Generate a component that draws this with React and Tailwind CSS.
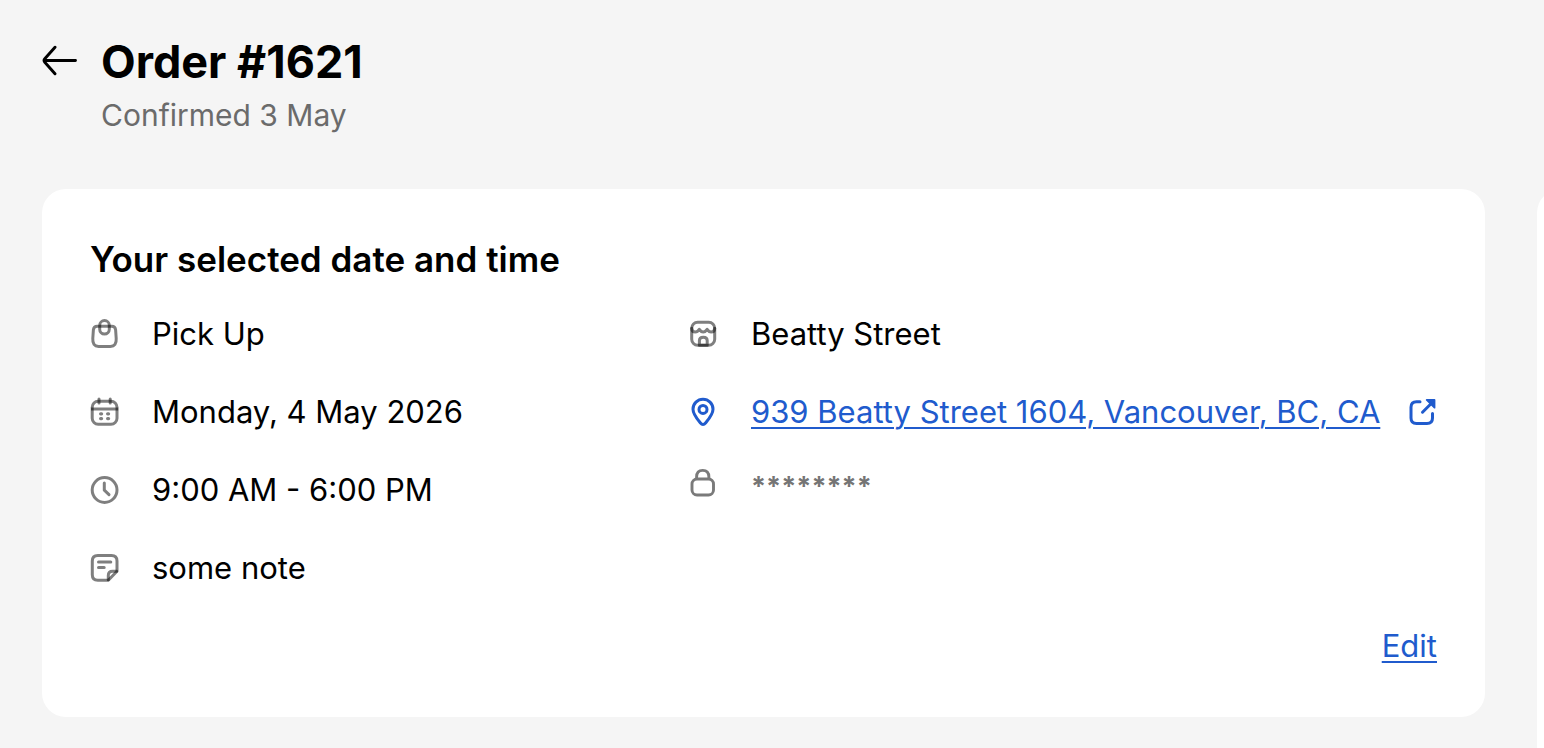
import React from 'react';

function Icon({ children, className = 'text-black' }) {
  return (
    <svg
      viewBox="0 0 30 30"
      className={`size-[30px] shrink-0 ${className}`}
      fill="none"
      stroke="currentColor"
      strokeWidth="3"
      strokeLinecap="round"
      strokeLinejoin="round"
      aria-hidden="true"
    >
      {children}
    </svg>
  );
}

const tone = { strokeOpacity: 0.5 };

function BagIcon() {
  return (
    <Icon>
      <path {...tone} d="M7.200 7.300h14.600q3.400 0 3.800 3.400l.6 8.800q.5 7.900-5.800 7.900H8.600q-6.300 0-5.800-7.900l.6-8.800q.4-3.400 3.800-3.400z" />
      <rect {...tone} x="9.700" y="1.600" width="9.600" height="13.400" rx="4.800" />
    </Icon>
  );
}

function CalendarIcon() {
  return (
    <Icon>
      <rect {...tone} x="2.200" y="4.300" width="24.800" height="23" rx="6" />
      <path {...tone} strokeLinecap="butt" d="M1 12h27.200" />
      <path {...tone} d="M9 2v4M20.200 2v4" />
      <path {...tone} strokeWidth="3.200" d="M10.600 16.800h1M17.600 16.800h1M10.600 21.600h1M17.600 21.600h1" />
    </Icon>
  );
}

function ClockIcon() {
  return (
    <Icon>
      <circle {...tone} cx="14.600" cy="15" r="12.400" />
      <path {...tone} d="M14.300 8v7.200l4.700 4.500" />
    </Icon>
  );
}

function NoteIcon() {
  return (
    <Icon>
      <path {...tone} d="M18.300 27.200H7.800q-5.500 0-5.500-5.500V8q0-5.500 5.500-5.500h13.700q5.500 0 5.500 5.500v10.200z" />
      <path {...tone} d="M18.300 26.800v-4.300q0-4.300 4.300-4.300h4" />
      <path {...tone} d="M8.500 8.900h12.300M8.500 14.600h5.700" />
    </Icon>
  );
}

function StoreIcon() {
  return (
    <Icon>
      <rect {...tone} x="2.700" y="3.300" width="23" height="23" rx="6" />
      <path {...tone} d="M2.700 9.300q.3 3.800 3.600 3.800 2.300 0 4-2.800 1.900 2.800 3.900 2.800t3.900-2.800q1.900 2.800 4 2.800 3.300 0 3.600-3.800" />
      <path {...tone} d="M10.400 26.300v-4.700q0-3.400 3.900-3.400t3.900 3.400v4.700z" />
    </Icon>
  );
}

function PinIcon() {
  return (
    <Icon className="text-[#205bcd]">
      <path strokeWidth="3" d="M14 27.500q-1.300 0-2.500-1.500C7.800 21.500 4 17.200 4 12.200a10 10 0 0 1 20 0c0 5-3.800 9.300-7.500 13.800q-1.200 1.500-2.500 1.500z" />
      <circle strokeWidth="3" cx="14" cy="12.400" r="4" />
    </Icon>
  );
}

function LockIcon() {
  return (
    <Icon>
      <g stroke="#7a7a7a" strokeWidth="2.900">
        <rect x="3" y="11" width="21.500" height="16" rx="5" />
        <path d="M7.600 10.500V9q0-6.600 6.100-6.600T19.900 9v1.500" />
      </g>
    </Icon>
  );
}

function ExternalIcon() {
  return (
    <Icon className="text-[#205bcd]">
      <path strokeWidth="3" d="M12 4.700H8.500q-5.500 0-5.500 5.500v10.800q0 5.500 5.500 5.500h10.500q5.500 0 5.500-5.500V16.500" />
      <path strokeWidth="3" d="M14.500 15.200L24.500 5.200" />
      <path strokeWidth="1.800" fill="currentColor" d="M18.700 2.900h7.800v7.800z" />
    </Icon>
  );
}

function Row({ icon, children }) {
  return (
    <li className="flex h-[46px] items-center gap-8">
      {icon}
      {children}
    </li>
  );
}

export default function App() {
  return (
    <div className="min-h-screen overflow-hidden bg-[#f5f5f5] pt-9 pb-[31px] pl-[42px] font-['Inter',sans-serif] text-[31px] text-black">
      <header className="flex items-start gap-6">
        <button type="button" aria-label="Back" className="mt-2 shrink-0">
          <svg viewBox="0 0 35 34" className="h-[34px] w-[35px]" fill="none" stroke="currentColor" strokeWidth="2.900" strokeLinecap="round" strokeLinejoin="round" aria-hidden="true">
            <path d="M33.500 16.500H2M13 3.200L2.800 14.800Q1.300 16.500 2.800 18.200L13 29.800" />
          </svg>
        </button>
        <div>
          <h1 className="text-[45px] leading-[52px] font-bold">Order #1621</h1>
          <p className="text-[30px] leading-[54px] text-[#6b6b6b]">Confirmed 3 May</p>
        </div>
      </header>

      <div className="mt-[47px] flex gap-[52px]">
        <main className="min-w-0 flex-1 rounded-3xl bg-white p-12">
          <h2 className="text-[35px] leading-[44px] font-semibold">Your selected date and time</h2>
          <div className="mt-[30px] grid grid-cols-[599px_1fr]">
            <ul className="flex flex-col gap-8">
              <Row icon={<BagIcon />}>Pick Up</Row>
              <Row icon={<CalendarIcon />}>Monday, 4 May 2026</Row>
              <Row icon={<ClockIcon />}>9:00 AM - 6:00 PM</Row>
              <Row icon={<NoteIcon />}>some note</Row>
            </ul>
            <ul className="flex flex-col gap-8">
              <Row icon={<StoreIcon />}>Beatty Street</Row>
              <Row icon={<PinIcon />}>
                <a href="#map" className="flex items-center gap-7 whitespace-nowrap text-[#205bcd]">
                  <span className="underline decoration-2 underline-offset-4">939 Beatty Street 1604, Vancouver, BC, CA</span>
                  <ExternalIcon />
                </a>
              </Row>
              <li className="flex h-8 items-center gap-8 text-[#757575]">
                <LockIcon />
                <span className="pt-2 text-[27px] font-bold">********</span>
              </li>
            </ul>
          </div>
          <div className="mt-8 flex justify-end">
            <button type="button" className="leading-[46px] text-[#205bcd] underline decoration-2 underline-offset-4">Edit</button>
          </div>
        </main>
        <aside className="-mb-[31px] w-[7px] shrink-0">
          <div className="h-full w-[600px] rounded-tl-3xl bg-white" />
        </aside>
      </div>
    </div>
  );
}
